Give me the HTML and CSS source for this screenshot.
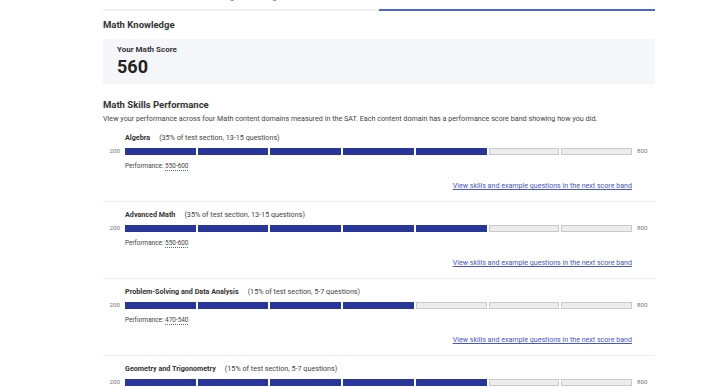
FILE: index.html
```html
<!DOCTYPE html>
<html lang="en">
<head>
    <meta charset="UTF-8">
    <meta name="viewport" content="width=device-width, initial-scale=1.0">
    <title>Math Score Report</title>
    <link rel="stylesheet" href="styles.css">
</head>
<body>
    <div class="page">
        <nav class="tabs">
            <div class="tab">Reading and Writing</div>
            <div class="tab active">Math</div>
        </nav>

        <h2 class="section-title">Math Knowledge</h2>
        <div class="score-box">
            <p class="score-label">Your Math Score</p>
            <p class="score-value">560</p>
        </div>

        <h2 class="section-title perf-title">Math Skills Performance</h2>
        <p class="intro">View your performance across four Math content domains measured in the SAT. Each content domain has a performance score band showing how you did.</p>

        <div class="domain">
            <div class="domain-name"><b>Algebra</b><span>(35% of test section, 13-15 questions)</span></div>
            <div class="band">
                <span class="band-min">200</span>
                <div class="segments">
                    <i class="on"></i><i class="on"></i><i class="on"></i><i class="on"></i><i class="on"></i><i></i><i></i>
                </div>
                <span class="band-max">800</span>
            </div>
            <p class="performance">Performance: <span class="range">550-600</span></p>
            <div class="next-band"><a href="#">View skills and example questions in the next score band</a></div>
        </div>

        <div class="domain">
            <div class="domain-name"><b>Advanced Math</b><span>(35% of test section, 13-15 questions)</span></div>
            <div class="band">
                <span class="band-min">200</span>
                <div class="segments">
                    <i class="on"></i><i class="on"></i><i class="on"></i><i class="on"></i><i class="on"></i><i></i><i></i>
                </div>
                <span class="band-max">800</span>
            </div>
            <p class="performance">Performance: <span class="range">550-600</span></p>
            <div class="next-band"><a href="#">View skills and example questions in the next score band</a></div>
        </div>

        <div class="domain">
            <div class="domain-name"><b>Problem-Solving and Data Analysis</b><span>(15% of test section, 5-7 questions)</span></div>
            <div class="band">
                <span class="band-min">200</span>
                <div class="segments">
                    <i class="on"></i><i class="on"></i><i class="on"></i><i class="on"></i><i></i><i></i><i></i>
                </div>
                <span class="band-max">800</span>
            </div>
            <p class="performance">Performance: <span class="range">470-540</span></p>
            <div class="next-band"><a href="#">View skills and example questions in the next score band</a></div>
        </div>

        <div class="domain">
            <div class="domain-name"><b>Geometry and Trigonometry</b><span>(15% of test section, 5-7 questions)</span></div>
            <div class="band">
                <span class="band-min">200</span>
                <div class="segments">
                    <i class="on"></i><i class="on"></i><i class="on"></i><i class="on"></i><i class="on"></i><i></i><i></i>
                </div>
                <span class="band-max">800</span>
            </div>
            <p class="performance">Performance: <span class="range">550-600</span></p>
            <div class="next-band"><a href="#">View skills and example questions in the next score band</a></div>
        </div>
    </div>
</body>
</html>
```

FILE: styles.css
```css
/* Global */
body {
    margin: 0;
    padding: 0;
    font-family: Roboto, "Liberation Sans", sans-serif;
    color: #333333;
    background: #ffffff;
    overflow: hidden;
}

.page {
    width: 552px;
    margin-left: 103px;
}

p {
    margin: 0;
}

/* Tabs (page is scrolled a bit) */
.tabs {
    display: grid;
    grid-template-columns: 1fr 1fr;
    margin-top: -12px;
}

.tab {
    text-align: center;
    font-size: 8px;
    line-height: 12px;
    padding: 4px 0 5px;
    color: #555555;
    border-bottom: 2px solid #f1f1f1;
}

.tab.active {
    color: #4a66d8;
    border-bottom-color: #4a66d8;
}

/* Headings */
.section-title {
    margin: 7px 0 7px;
    font-size: 9.5px;
    line-height: 14px;
    font-weight: 700;
    color: #333333;
}

.perf-title {
    margin: 14px 0 1px;
}

/* Score box */
.score-box {
    background: #f5f6fa;
    padding: 5px 14px 5px;
}

.score-label {
    font-size: 8px;
    line-height: 11px;
    font-weight: 700;
}

.score-value {
    font-size: 18px;
    line-height: 24px;
    font-weight: 700;
    color: #222222;
}

.intro {
    font-size: 7.2px;
    line-height: 11px;
    color: #444444;
    margin-bottom: 1px;
}

/* Domain rows */
.domain {
    padding: 7px 0 10px;
    border-bottom: 1px solid #eeeeee;
}

.domain-name {
    padding-left: 22px;
    font-size: 7.2px;
    line-height: 12px;
    color: #444444;
}

.domain-name b {
    color: #333333;
    margin-right: 9px;
}

.band {
    display: grid;
    grid-template-columns: 22px 1fr 23px;
    align-items: center;
    height: 7px;
    line-height: 7px;
    margin-top: 4px;
    font-size: 6.2px;
    color: #777777;
}

.band-min {
    text-align: right;
    padding-right: 5px;
}

.band-max {
    padding-left: 5px;
}

.segments {
    display: grid;
    grid-template-columns: repeat(7, 1fr);
    gap: 2px;
    height: 7px;
}

.segments i {
    background: #ececec;
    border: 1px solid #c9c9c9;
}

.segments i.on {
    background: #28369a;
    border-color: #28369a;
}

.performance {
    margin-top: 6px;
    padding-left: 22px;
    font-size: 6.4px;
    line-height: 10px;
    color: #444444;
}

.range {
    border-bottom: 1px dotted #4a66d8;
}

.next-band {
    margin-top: 9px;
    padding-right: 23px;
    text-align: right;
    font-size: 7.1px;
    line-height: 11px;
}

.next-band a {
    color: #4655c9;
}
```
